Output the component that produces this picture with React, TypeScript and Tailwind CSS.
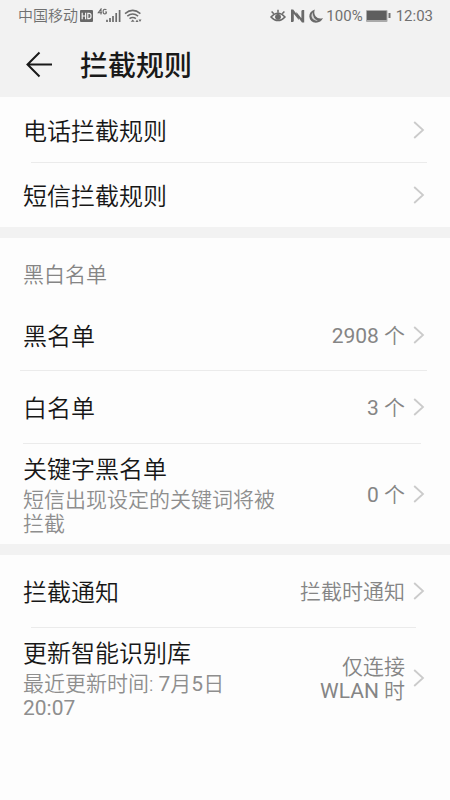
import type { ReactNode } from "react";

function Chevron() {
  return (
    <svg className="h-[18px] w-3 shrink-0" viewBox="0 0 12 18" fill="none" stroke="#cbcbcb" strokeWidth="1.8" aria-hidden="true">
      <path d="M1.2 1L10 9L1.2 17" />
    </svg>
  );
}

type RowProps = {
  title: string;
  detail?: ReactNode;
  value?: ReactNode;
  size: string;
};

function Latin({ children }: { children: ReactNode }) {
  return <span className="font-normal">{children}</span>;
}

function Row({ title, detail, value, size }: RowProps) {
  return (
    <button type="button" className={`flex w-full items-center pr-[25px] pl-[23px] ${size}`}>
      <span className="flex-1 text-left">
        <span className={`block text-[24px] leading-9 text-[#171717] ${detail ? "" : "pt-1"}`}>{title}</span>
        {detail && <span className="block max-w-[260px] text-[21px] leading-6 text-[#8e8e8e]">{detail}</span>}
      </span>
      {value && <span className="mr-2 pt-[2px] text-right text-[21px] leading-6 text-[#858585]">{value}</span>}
      <Chevron />
    </button>
  );
}

function Divider({ inset }: { inset: string }) {
  return <div className={`h-px bg-[#ebebeb] ${inset}`} />;
}

function Band() {
  return <div className="h-[11px] bg-[#f2f2f2]" />;
}

function StatusBar() {
  return (
    <div className="flex h-8 items-center justify-between pr-[17px] pl-[18px] text-[#707070]">
      <div className="flex items-center">
        <span className="text-[15px] leading-5">中国移动</span>
        <svg className="ml-[1px] h-4 w-16" viewBox="0 0 64 16" fill="none" aria-label="HD 4G">
          <rect x="1" y="2" width="13" height="12" rx="1" fill="#686868" />
          <path d="M3.2 4.8v6.4M6.6 4.8v6.4M3.2 8h3.4M8.8 5.4H10q2 0 2 2v1.2q0 2-2 2H8.8z" stroke="#f2f2f2" strokeWidth="1.2" />
          <path d="M22 6.4V1L19.3 4.8H23M27.4 2q-.6-.8-1.5-.8-1.8 0-1.8 2.4t1.8 2.4q1.6 0 1.6-2h-1.4" stroke="#686868" strokeWidth="1.1" />
          <path d="M28 14v-2.2M31 14v-4M34 14V8M37.2 14V5M40.6 14V2" stroke="#6c6c6c" strokeWidth="1.7" />
          <path d="M46 5.6q7.7-6.4 15.4 0M48.3 8.2q5.4-4.4 10.8 0M50.5 10.7q3.2-2.5 6.4 0" stroke="#6c6c6c" strokeWidth="1.5" />
          <path d="M53.7 11.5l2 2.2h-4zM56.5 14l1.5-2.4 1.5 2.4zM59.5 11.6h3L61 14z" fill="#6c6c6c" />
        </svg>
      </div>
      <div className="flex items-center font-normal">
        <svg className="mr-[2px] h-4 w-[54px]" viewBox="0 0 54 16" fill="none" stroke="#6a6a6a" aria-hidden="true">
          <path d="M1 8.9q7-7.4 14 0-7 7.4-14 0z" strokeWidth="1.5" />
          <circle cx="8" cy="8.9" r="2.5" fill="#6a6a6a" />
          <path d="M1.6 3.4l2.2 2.4M8 1.8v3M14.4 3.4l-2.2 2.4" strokeWidth="1.5" />
          <path d="M21 14V1.5h2.2l5.6 7.6V12l-5-6.2v7.4l-1 .8zM34.2 2v12.5H32l-5.6-7.6V4l5 6.2V2.8l1-.8z" fill="#6a6a6a" stroke="none" />
          <path d="M44.8 1.4q-5.6 2-5.5 7 .7 6 6.6 6.3 5.1 0 7.1-4.6-4.6 1.5-7.2-1.5-2.3-3-1-7.2z" fill="#6a6a6a" stroke="none" />
          <path d="M42.5 4.2q-2.4 4.8 1 7.4 2 1.5 4.2.9-4.6-1.4-5.2-8.3z" fill="#d4d4d4" stroke="none" />
        </svg>
        <span className="text-[15px] leading-5">100%</span>
        <svg className="mr-1 ml-[2px] h-4 w-[27px]" viewBox="0 0 27 16" aria-hidden="true">
          <rect x="1" y="2" width="21.5" height="12" rx="1" fill="#aaa" />
          <rect x="2" y="3" width="19.5" height="9" fill="#5e5e5e" />
          <rect x="23.5" y="5" width="2" height="5" fill="#707070" />
        </svg>
        <span className="text-[15px] leading-5">12:03</span>
      </div>
    </div>
  );
}

export default function App() {
  return (
    <div className="min-h-screen bg-[#fdfdfd] font-[Roboto,'Noto_Sans_CJK_SC',sans-serif] font-[350]">
      <header className="bg-[#f2f2f2]">
        <StatusBar />
        <div className="flex h-[65px] items-center pl-[26px]">
          <button type="button" aria-label="返回" className="mr-[27px]">
            <svg className="block h-7 w-[27px]" viewBox="0 0 27 28" fill="none" stroke="#191919" strokeWidth="2">
              <path d="M13.5 1.5L1.5 13.5L13.5 25.5M1.5 13.5H26" />
            </svg>
          </button>
          <h1 className="pt-1 text-[28px] leading-10 font-medium text-[#191919]">拦截规则</h1>
        </div>
      </header>
      <main>
        <Row title="电话拦截规则" size="h-[65px]" />
        <Divider inset="mr-[23px] ml-[31px]" />
        <Row title="短信拦截规则" size="h-16" />
        <Band />
        <h2 className="px-[23px] pt-[25px] pb-[13px] text-[21px] leading-6 text-[#858585]">黑白名单</h2>
        <Row title="黑名单" value={<><Latin>2908</Latin> 个</>} size="h-[70px]" />
        <Divider inset="mr-[23px] ml-[20px]" />
        <Row title="白名单" value={<><Latin>3</Latin> 个</>} size="h-[72px]" />
        <Divider inset="mr-[29px] ml-[23px]" />
        <Row title="关键字黑名单" detail="短信出现设定的关键词将被拦截" value={<><Latin>0</Latin> 个</>} size="h-[100px]" />
        <Band />
        <Row title="拦截通知" value="拦截时通知" size="h-[72px]" />
        <Divider inset="mr-[34px] ml-[31px]" />
        <Row
          title="更新智能识别库"
          detail={<>最近更新时间: <Latin>7</Latin>月<Latin>5</Latin>日<br /><Latin>20:07</Latin></>}
          value={<>仅连接<br /><Latin>WLAN</Latin> 时</>}
          size="h-[100px]"
        />
      </main>
    </div>
  );
}
